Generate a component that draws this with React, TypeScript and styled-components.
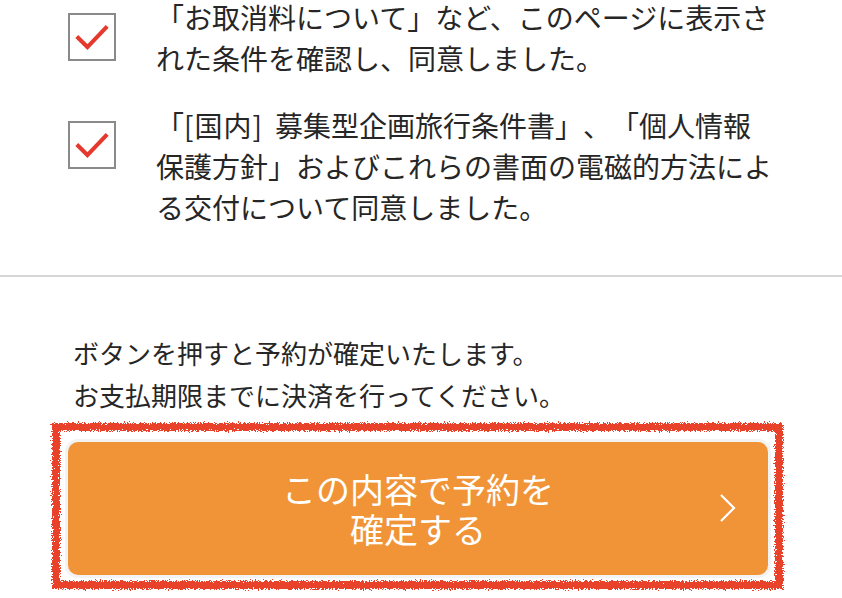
import React from "react";
import styled, { createGlobalStyle } from "styled-components";

const GlobalStyle = createGlobalStyle`
  html, body {
    margin: 0;
    padding: 0;
    background: #fff;
  }
  body {
    font-family: "Noto Sans CJK JP", "Noto Sans", sans-serif;
    color: #262626;
    text-spacing-trim: space-all;
  }
`;

const Page = styled.div`
  width: 842px;
  height: 598px;
  overflow: hidden;
  background: #fff;
`;

const AgreeList = styled.div`
  margin-top: -3px;
  display: flex;
  flex-direction: column;
  gap: 26px;
  padding-bottom: 47px;
  border-bottom: 2px solid #d6d6d6;
`;

const AgreeRow = styled.label`
  display: flex;
  align-items: flex-start;
  gap: 40px;
  padding-left: 68px;
`;

const Box = styled.span`
  flex: 0 0 auto;
  width: 44px;
  height: 44px;
  margin-top: 16px;
  border: 2px solid #8a8a8a;
  display: flex;
  align-items: center;
  justify-content: center;
  background: #fff;
`;

const AgreeText = styled.p`
  margin: 0;
  width: 619px;
  font-size: 28px;
  line-height: 41px;
  text-spacing-trim: space-all;
`;

const Tag = styled.span`
  letter-spacing: 1px;
  margin-right: 12px;
`;

const Notice = styled.div`
  padding: 55px 0 0 73px;
  font-size: 26px;
  line-height: 42px;
`;

const ButtonArea = styled.div`
  position: relative;
  margin: 26px 0 0 68px;
  width: 700px;
`;

const Marker = styled.span`
  position: absolute;
  top: -19px;
  left: -16px;
  right: -15px;
  bottom: -14px;
  border: 8px solid #e8432a;
  pointer-events: none;
  filter: url(#rough);
`;

const ConfirmButton = styled.button`
  position: relative;
  width: 700px;
  height: 133px;
  border: none;
  border-radius: 10px;
  background: #f09437;
  color: #fff;
  font-family: "Noto Sans CJK JP", "Noto Sans", sans-serif;
  font-size: 34px;
  line-height: 40px;
  display: flex;
  align-items: center;
  justify-content: center;
  box-shadow: 0 0 0 3px #f3f3f3;
`;

const Chevron = styled.svg`
  position: absolute;
  right: 32px;
  top: 51px;
`;

const Check = () => (
  <svg width="44" height="44" viewBox="0 0 48 48">
    <polyline
      points="9,25 19,35 39,14"
      fill="none"
      stroke="#e5392e"
      strokeWidth="4.5"
      strokeLinecap="square"
    />
  </svg>
);

const items: React.ReactNode[] = [
  "「お取消料について」など、このページに表示された条件を確認し、同意しました。",
  <>
    「<Tag>[国内]</Tag>募集型企画旅行条件書」、「個人情報保護方針」およびこれらの書面の電磁的方法による交付について同意しました。
  </>,
];

export default function App() {
  return (
    <Page>
      <GlobalStyle />
      <svg width="0" height="0" style={{ position: "absolute" }}>
        <filter id="rough">
          <feTurbulence type="fractalNoise" baseFrequency="0.8" numOctaves="3" seed="3" />
          <feDisplacementMap in="SourceGraphic" scale="7" />
        </filter>
      </svg>
      <AgreeList>
        {items.map((t, i) => (
          <AgreeRow key={i}>
            <Box>
              <Check />
            </Box>
            <AgreeText>{t}</AgreeText>
          </AgreeRow>
        ))}
      </AgreeList>
      <Notice>
        ボタンを押すと予約が確定いたします。
        <br />
        お支払期限までに決済を行ってください。
      </Notice>
      <ButtonArea>
        <Marker />
        <ConfirmButton>
          この内容で予約を
          <br />
          確定する
          <Chevron width="17" height="30" viewBox="0 0 17 30">
            <polyline points="2,2 15,15 2,28" fill="none" stroke="#fff" strokeWidth="2.2" />
          </Chevron>
        </ConfirmButton>
      </ButtonArea>
    </Page>
  );
}
